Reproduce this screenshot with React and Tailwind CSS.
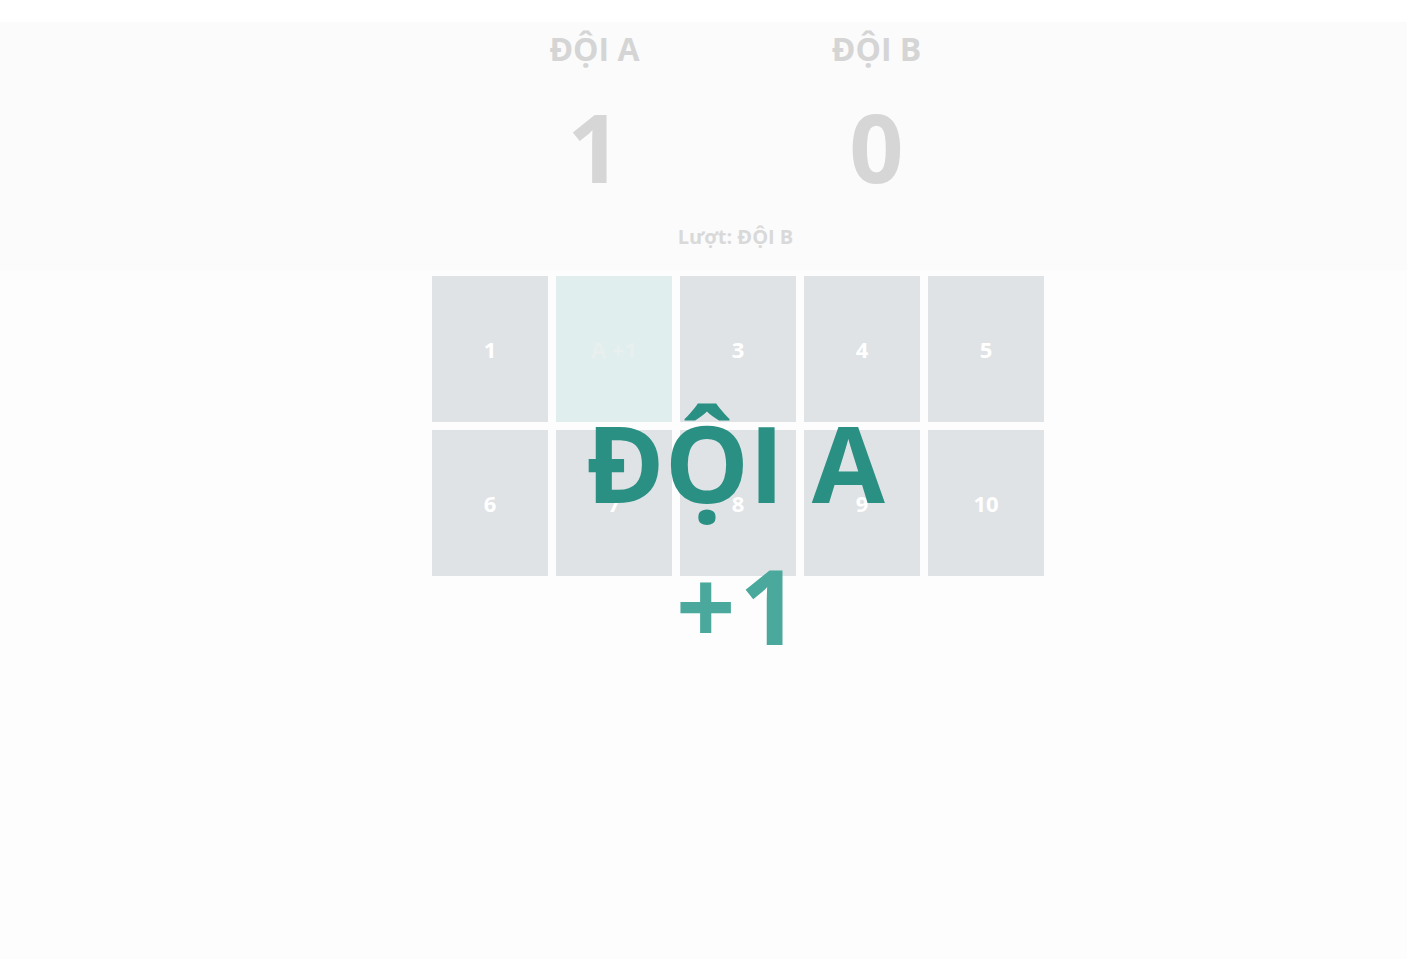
import React from "react";

const tiles = [
  { n: "1" },
  { n: "A +1", claimed: true },
  { n: "3" },
  { n: "4" },
  { n: "5" },
  { n: "6" },
  { n: "7" },
  { n: "8" },
  { n: "9" },
  { n: "10" },
];

function TeamScore({ name, score }) {
  return (
    <div className="w-[200px] flex flex-col items-center">
      <div className="text-[32px] leading-none font-bold text-[#d5d5d5]">{name}</div>
      <div className="mt-[34px] text-[95px] leading-none font-bold text-[#d6d6d6]">{score}</div>
    </div>
  );
}

export default function App() {
  return (
    <div className="relative min-h-[959px] bg-[#fdfdfd] font-['Open_Sans','Noto_Sans',sans-serif] overflow-hidden">
      <div className="h-[22px] bg-white" />

      {/* scoreboard */}
      <div className="h-[248px] bg-[#fbfbfb] pl-[64px] pt-[11px] flex flex-col items-center">
        <div className="flex gap-[82px]">
          <TeamScore name="ĐỘI A" score="1" />
          <TeamScore name="ĐỘI B" score="0" />
        </div>
        <div className="mt-[33px] text-[20px] leading-none font-bold text-[#d9d9d9]">Lượt: ĐỘI B</div>
      </div>

      {/* board */}
      <div className="pl-[69px] pt-[6px] flex justify-center">
        <div className="grid grid-cols-5 gap-2 w-[612px]">
          {tiles.map((t) => (
            <div
              key={t.n}
              className={
                t.claimed
                  ? "h-[146px] bg-[#e0efee] flex items-center justify-center text-[22px] font-bold text-[#e9eeee]"
                  : "h-[146px] bg-[#e0e3e6] flex items-center justify-center text-[22px] font-bold text-white"
              }
            >
              {t.n}
            </div>
          ))}
        </div>
      </div>

      {/* point announcement */}
      <div className="absolute inset-0 pl-[64px] pt-[409px] flex flex-col items-center pointer-events-none">
        <div className="text-[106px] leading-none font-bold text-[#2a9083]">ĐỘI A</div>
        <div className="mt-[38px] pl-[4px] flex gap-[4px] text-[104px] leading-none font-bold text-[#4aa99c]">
          <span>+</span>
          <span>1</span>
        </div>
      </div>
    </div>
  );
}
